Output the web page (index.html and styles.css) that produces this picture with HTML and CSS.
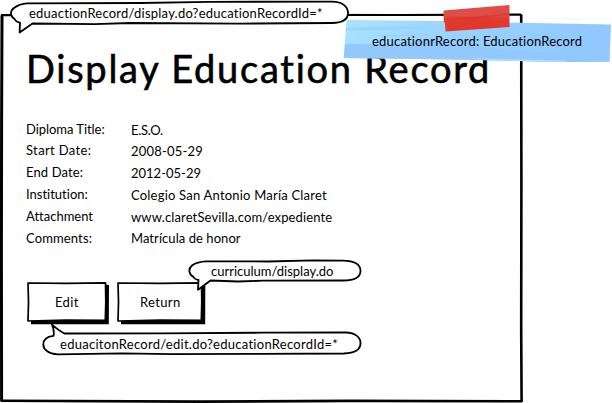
FILE: index.html
```
<!DOCTYPE html>
<html lang="en">
<head>
<meta charset="utf-8">
<title>Display Education Record</title>
<link rel="stylesheet" href="styles.css">
</head>
<body>
<main class="panel">
  <svg class="frame" viewBox="0 0 612 403" aria-hidden="true">
    <path d="M2 15.2 L1.6 120 L1.4 250 L1.6 401.5" stroke-width="3"/>
    <path d="M1 15.2 L120 14.8 L400 15 L521 14.6" stroke-width="2.2"/>
    <path d="M521.2 14.3 L521.4 180 L521.2 330 L521.6 402" stroke-width="2.6"/>
    <path d="M1 400.8 L200 401.6 L350 400.9 L522 401.2" stroke-width="2.6"/>
  </svg>

  <h1 class="title">Display Education Record</h1>

  <dl class="record">
    <dt class="fit-a">Diploma Title:</dt><dd class="fit-b">E.S.O.</dd>
    <dt class="fit-c">Start Date:</dt><dd class="fit-d">2008-05-29</dd>
    <dt class="fit-e">End Date:</dt><dd>2012-05-29</dd>
    <dt>Institution:</dt><dd class="fit-d">Colegio San Antonio María Claret</dd>
    <dt>Attachment</dt><dd class="fit-e">www.claretSevilla.com/expediente</dd>
    <dt class="fit-e">Comments:</dt><dd class="fit-f">Matrícula de honor</dd>
  </dl>

  <div class="actions">
    <button class="btn edit" type="button">
      <svg class="btn-art" viewBox="0 0 84 43" aria-hidden="true">
        <path class="shade" d="M5 38.5 L79 38 L79 2.5 L83 3 L82.8 42.3 L5 42.3 Z"/>
        <path class="face" d="M2 1 L40 1.4 L79.500 .8 L79.800 20 L79.300 38.300 L40 38 L2 39 L2.5 20 Z"/>
      </svg>
      <span>Edit</span>
    </button>
    <button class="btn return" type="button">
      <svg class="btn-art" viewBox="0 0 91 43" aria-hidden="true">
        <path class="shade" d="M5 38.5 L84 38 L84 2.5 L89.300 3 L89.200 42.3 L5 42.3 Z"/>
        <path class="face" d="M2 1 L44 1.4 L85.500 .8 L85.800 20 L85.300 38.300 L44 38 L2 39 L2.5 20 Z"/>
      </svg>
      <span>Return</span>
    </button>
  </div>
</main>

<aside class="note bubble-display">
  <svg viewBox="0 0 340 36" aria-hidden="true"><path d="M17 3.4 L130 3 L200 1.8 L322 1.7 C333 1.7 338 7 338 13 C338 19 333 22.7 322 23 L230 23.6 L120 23 L85 24.2 L22.5 23.5 L9.6 32.5 L10 22.5 C8 22 6 22.4 4.5 19 C0 16 -.2 11 4 8 C7.500 5.400 11 3.800 17 3.400 Z"/></svg>
  <span>eduactionRecord/display.do?educationRecordId=*</span>
</aside>

<aside class="note bubble-curriculum">
  <svg viewBox="0 0 175 34" aria-hidden="true"><path d="M18 3.3 L80 3.5 L125 2.300 L155 2.700 C167 3 172.500 7 172.500 13 C172.500 19 167 22.500 155 22.500 L75 22.700 L50 23.500 L22.500 22.500 L10 31.700 L10.500 22 C8 21.500 6.500 21.600 5.500 19 C.5 16 0 11 4 7.500 C8 4.500 12 3.500 18 3.300 Z"/></svg>
  <span>curriculum/display.do</span>
</aside>

<aside class="note bubble-edit">
  <svg viewBox="0 0 320 34" aria-hidden="true"><path d="M22.500 10.500 L120 10.300 L220 9.700 L304 9.500 C313 9.800 318.500 14 318.500 20 C318.500 26 313 30.200 302 30.500 L220 30.800 L130 31.200 L80 30.300 L16 31.300 C6 31 1.300 26 1.300 21.500 C1.300 16.500 5 13.500 11.500 12.800 C12.500 9 11.300 5 10 1.700 C14 5 18 8.500 22.500 10.500 Z"/></svg>
  <span>eduacitonRecord/edit.do?educationRecordId=*</span>
</aside>

<aside class="sticky">
  <svg viewBox="0 0 270 60" aria-hidden="true">
    <defs>
      <linearGradient id="paper" x1="0" y1="0" x2="1" y2=".12">
        <stop offset="0" stop-color="#aae4ff"/>
        <stop offset=".45" stop-color="#98d2ff"/>
        <stop offset="1" stop-color="#90c8ff"/>
      </linearGradient>
      <linearGradient id="tape" x1="0" y1="0" x2="0" y2="1">
        <stop offset=".4" stop-color="#de4d47"/>
        <stop offset=".5" stop-color="#e13a2f"/>
        <stop offset="1" stop-color="#e2362a"/>
      </linearGradient>
    </defs>
    <path d="M3.500 15 L100 16 L190 18 L268 19.500 L266.500 56.500 L220 57 L112 54.500 L.7 53 Z" fill="url(#paper)"/>
    <path d="M190 13.500 L265 13.700 L265 14.200 L215 14.500 Z" fill="#e4f5ff"/>
    <path d="M2 39 L60 39 L90 35 L105 39 L180 46 L266.500 52 L266.500 56.500 L220 57 L112 54.500 L.7 53 Z" fill="#90c8ff"/>
    <path d="M3 23 L50 21.500 L108 22.500 L60 24.500 L2.500 25.500 Z M25 31 L80 28 L102 30 L60 31.500 Z" fill="#98d4ff"/>
    <path d="M118 53 L180 54.500 L225 55.500 L220 57 L160 55.700 Z" fill="#b4dcff"/>
    <path d="M100.500 5.500 L166.500 0 L166.500 22 L102.500 26.500 L102 18 L100.800 17 Z" fill="url(#tape)"/>
    <path d="M103 14 L140 11 L166 8 L166 10 L130 14 Z" fill="#d6322c" opacity=".55"/>
  </svg>
  <span>educationrRecord: EducationRecord</span>
</aside>
</body>
</html>
```
FILE: styles.css
```
* { box-sizing: border-box; }

body {
  position: relative;
  margin: 0;
  width: 612px;
  height: 403px;
  overflow: hidden;
  background: #fff;
  color: #000;
  font: 13px/22px Lato, "Open Sans", sans-serif;
  font-variant-ligatures: none;
}

svg { display: block; overflow: visible; }
svg path { stroke-linejoin: round; }

.panel {
  position: relative;
  display: flex;
  flex-direction: column;
  width: 523px;
  height: 403px;
  padding: 53px 20px 0 26px;
}

.frame {
  position: absolute;
  top: 0;
  left: 0;
  width: 612px;
  height: 403px;
  fill: none;
  stroke: #000;
}

.title {
  margin: 0 0 35px;
  font-size: 38px;
  font-weight: 400;
  line-height: 30px;
  letter-spacing: 1.75px;
  white-space: nowrap;
  -webkit-text-stroke: .6px #000;
}

.record {
  display: grid;
  grid-template-columns: 105px 1fr;
  grid-template-rows: 21px repeat(5, 22px);
  margin: 0;
}
.record dt, .record dd { margin: 0; white-space: nowrap; }
.record dd { padding-top: 1px; }
.record dd:last-child { padding-top: 0; }

.fit-a { letter-spacing: -.05px; }
.fit-b { letter-spacing: -.31px; }
.fit-c { letter-spacing: .36px; }
.fit-d { letter-spacing: .21px; }
.fit-e { letter-spacing: .13px; }
.fit-f { letter-spacing: .06px; }

.actions { display: flex; gap: 6px; margin-top: 33px; }

.btn {
  position: relative;
  height: 43px;
  padding: 0;
  border: 0;
  background: none;
  color: inherit;
  font: inherit;
  text-align: left;
  letter-spacing: .35px;
}
.btn span { position: relative; display: block; margin-top: -4px; }
.btn-art { position: absolute; inset: 0; }
.edit { width: 84px; padding-left: 29px; }
.return { width: 91px; padding-left: 24px; }
.shade { fill: #000; }
.face { fill: #fff; stroke: #000; stroke-width: 1.7; }

.note, .sticky { position: absolute; white-space: nowrap; }
.note svg, .sticky svg { position: absolute; top: 0; left: 0; width: 100%; height: 100%; }
.note path { fill: #fff; stroke: #000; stroke-width: 1.8; }
.note span, .sticky span { position: relative; display: block; }

.bubble-display { left: 10px; top: 0; width: 340px; height: 36px; padding: 2px 0 0 19px; letter-spacing: .228px; }
.bubble-curriculum { left: 188px; top: 258px; width: 175px; height: 34px; padding: 2px 0 0 23px; }
.bubble-edit { left: 42px; top: 323px; width: 320px; height: 34px; padding: 10px 0 0 18px; letter-spacing: .275px; }
.sticky { left: 343px; top: 5px; width: 270px; height: 60px; padding: 29px 0 0 29px; line-height: 14px; letter-spacing: .195px; }
```
